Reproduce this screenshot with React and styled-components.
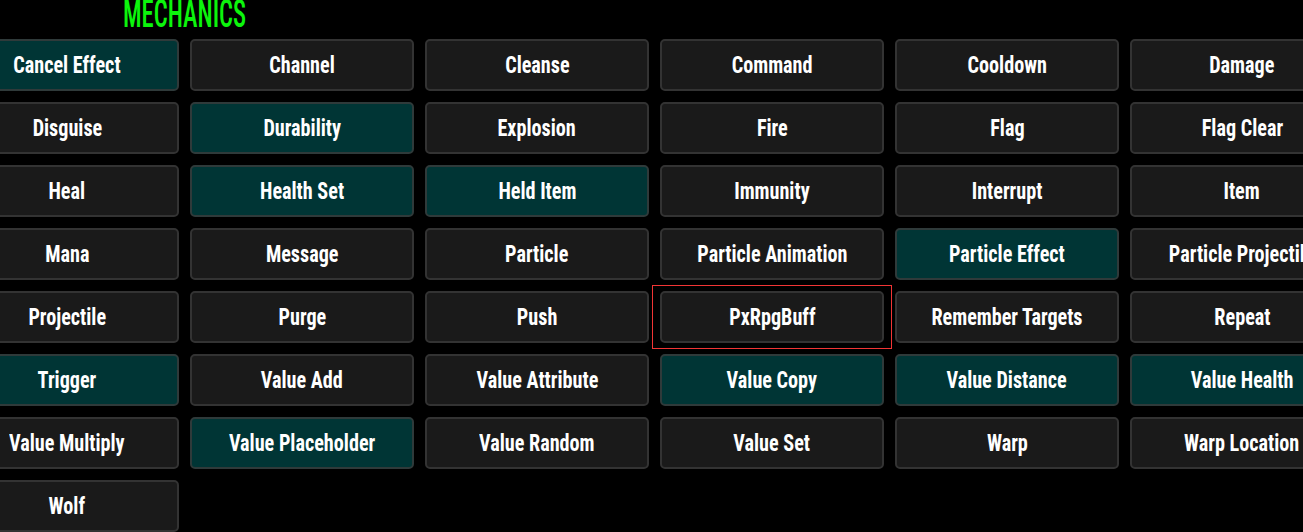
import React from "react";
import styled, { createGlobalStyle } from "styled-components";

const GlobalStyle = createGlobalStyle`
  html, body { margin: 0; padding: 0; background: #000; overflow: hidden; }
  body { font-family: Roboto, "Liberation Sans", sans-serif; color: #fff; }
`;

const Page = styled.div`
  width: 1303px;
  height: 532px;
  overflow: hidden;
  background: #000;
`;

const Header = styled.h1`
  margin: 0;
  height: 39px;
  padding-left: 123px;
  display: flex;
  align-items: flex-end;
`;

const Title = styled.span`
  display: inline-block;
  font-family: Roboto, sans-serif;
  font-stretch: condensed;
  font-weight: 500;
  font-size: 39px;
  line-height: 1;
  color: #0cf50c;
  transform: scaleX(0.63);
  transform-origin: left center;
  margin-bottom: 5px;
`;

const Grid = styled.div`
  display: grid;
  grid-template-columns: repeat(6, 224px);
  grid-auto-rows: 52px;
  gap: 11px;
  margin-left: -45px;
`;

const Button = styled.button`
  position: relative;
  display: flex;
  align-items: center;
  justify-content: center;
  box-sizing: border-box;
  width: 224px;
  height: 52px;
  padding: 0;
  border: 2px solid ${p => (p.$active ? "#2f3a3a" : "#333")};
  border-radius: 5px;
  background: ${p => (p.$active ? "#003535" : "#1a1a1a")};
  color: #fff;
  cursor: pointer;
  white-space: nowrap;
  overflow: visible;
`;

const Label = styled.span`
  display: inline-block;
  font-family: Roboto, sans-serif;
  font-stretch: condensed;
  font-weight: 700;
  font-size: 24px;
  line-height: 1;
  transform: scaleX(0.84);
  margin-top: -1px;
`;

const Highlight = styled.span`
  position: absolute;
  left: -10px;
  right: -10px;
  top: -8px;
  bottom: -8px;
  border: 1px solid #f23535;
  pointer-events: none;
`;

const mechanics = [
  ["Cancel Effect", true], ["Channel"], ["Cleanse"], ["Command"], ["Cooldown"], ["Damage"],
  ["Disguise"], ["Durability", true], ["Explosion"], ["Fire"], ["Flag"], ["Flag Clear"],
  ["Heal"], ["Health Set", true], ["Held Item", true], ["Immunity"], ["Interrupt"], ["Item"],
  ["Mana"], ["Message"], ["Particle"], ["Particle Animation"], ["Particle Effect", true], ["Particle Projectile"],
  ["Projectile"], ["Purge"], ["Push"], ["PxRpgBuff", false, true], ["Remember Targets"], ["Repeat"],
  ["Trigger", true], ["Value Add"], ["Value Attribute"], ["Value Copy", true], ["Value Distance", true], ["Value Health", true],
  ["Value Multiply"], ["Value Placeholder", true], ["Value Random"], ["Value Set"], ["Warp"], ["Warp Location"],
  ["Wolf"],
];

export default function App() {
  return (
    <Page>
      <GlobalStyle />
      <Header>
        <Title>MECHANICS</Title>
      </Header>
      <Grid>
        {mechanics.map(([name, active, selected]) => (
          <Button key={name} $active={active}>
            {selected && <Highlight />}
            <Label>{name}</Label>
          </Button>
        ))}
      </Grid>
    </Page>
  );
}
